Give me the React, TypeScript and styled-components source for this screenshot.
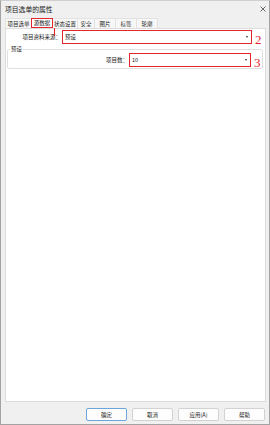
import React from "react";
import styled, { createGlobalStyle } from "styled-components";

const RED = "#e3262b";

const Global = createGlobalStyle`
  html, body { margin: 0; padding: 0; background: #f0f0f0; }
  * { box-sizing: border-box; }
  body { font-family: "Noto Sans CJK SC", "Noto Sans", sans-serif; font-size: 5.5px; color: #1a1a1a; }
`;

const Window = styled.div`
  width: 270px;
  height: 425px;
  border: 1px solid #a3a3a3;
  border-top-color: #cfcfcf;
  background: #f0f0f0;
  display: flex;
  flex-direction: column;
  position: relative;
`;

const TitleBar = styled.div`
  height: 16px;
  flex: none;
  display: flex;
  align-items: center;
  justify-content: space-between;
  padding: 0 3px 1px 4px;
  font-size: 6.8px;
  color: #222;
`;

const TabRow = styled.div`
  height: 11px;
  flex: none;
  display: flex;
  align-items: flex-end;
  padding-left: 4px;
  position: relative;
`;

const Tab = styled.div<{ $active?: boolean; $w: number }>`
  width: ${(p) => p.$w}px;
  height: 10px;
  display: flex;
  align-items: center;
  justify-content: center;
  background: ${(p) => (p.$active ? "#ffffff" : "#f7f7f7")};
  border: ${(p) => (p.$active ? `1.5px solid ${RED}` : "1px solid #e2e2e2")};
  border-bottom: ${(p) => (p.$active ? `1.5px solid ${RED}` : "none")};
  margin-right: -1px;
  font-size: 5.5px;
  white-space: nowrap;
  position: relative;
  z-index: ${(p) => (p.$active ? 1 : 0)};
`;

const Callout = styled.svg`
  position: absolute;
  left: 52px;
  top: 11px;
  z-index: 2;
`;

const Panel = styled.div`
  flex: 1;
  margin: 0 3px 0 4px;
  background: #ffffff;
  border: 1px solid #dcdcdc;
  padding: 1px 2px 0 0;
  display: flex;
  flex-direction: column;
`;

const FieldRow = styled.div`
  display: flex;
  align-items: center;
  height: 14px;
`;

const Label = styled.div<{ $w: number }>`
  width: ${(p) => p.$w}px;
  flex: none;
  text-align: right;
  font-size: 5.5px;
  line-height: 7px;
  padding: 1px 1px 0 0;
`;

const Select = styled.div`
  flex: 1;
  height: 14px;
  border: 1.5px solid ${RED};
  background: #fff;
  display: flex;
  align-items: center;
  justify-content: space-between;
  padding: 0 3px 0 2px;
  font-size: 5.5px;
`;

const Caret = styled.span`
  width: 0;
  height: 0;
  border-left: 1.5px solid transparent;
  border-right: 1.5px solid transparent;
  border-top: 2px solid #333;
`;

const Marker = styled.span`
  width: 11px;
  flex: none;
  padding-left: 3px;
  align-self: flex-end;
  margin-bottom: -2px;
  font-family: "Liberation Serif", serif;
  font-size: 13px;
  color: ${RED};
  line-height: 1;
`;

const Group = styled.fieldset`
  margin: 1px 0 0 1px;
  padding: 0 0 1px 0;
  border: 1px solid #e0e0e0;
  border-radius: 2px;
  min-width: 0;
`;

const Legend = styled.legend`
  font-size: 5.5px;
  line-height: 8px;
  padding: 0 1px;
  margin-left: 2px;
`;

const Footer = styled.div`
  height: 22px;
  flex: none;
  display: flex;
  justify-content: flex-end;
  align-items: flex-start;
  gap: 5px;
  padding: 6px 4px 0 0;
`;

const Button = styled.div<{ $default?: boolean }>`
  width: 41px;
  height: 13px;
  display: flex;
  align-items: center;
  justify-content: center;
  background: #fdfdfd;
  border: 1px solid ${(p) => (p.$default ? "#6aa6dc" : "#d2d2d2")};
  border-radius: 2px;
  font-size: 5.5px;
  color: #222;
`;

const tabs: [string, number, boolean?][] = [
  ["项目选单", 27],
  ["源数据", 22, true],
  ["状态设置", 26],
  ["安全", 18],
  ["图片", 22],
  ["标签", 22],
  ["轮廓", 22],
];

export default function App() {
  return (
    <>
      <Global />
      <Window>
        <TitleBar>
          <span>项目选单的属性</span>
          <svg width="6" height="6" viewBox="0 0 6 6">
            <path d="M0.5 0.5 L5.5 5.5 M5.5 0.5 L0.5 5.5" stroke="#444" strokeWidth="0.8" />
          </svg>
        </TitleBar>
        <TabRow>
          {tabs.map(([t, w, a]) => (
            <Tab key={t} $w={w} $active={a}>
              {t}
            </Tab>
          ))}
          <Callout width="3" height="8" viewBox="0 0 3 8">
            <path d="M1.5 0 L1.5 8" stroke={RED} strokeWidth="1.1" />
          </Callout>
        </TabRow>
        <Panel>
          <FieldRow>
            <Label $w={56}>项目资料来源：</Label>
            <Select>
              <span>预设</span>
              <Caret />
            </Select>
            <Marker>2</Marker>
          </FieldRow>
          <Group>
            <Legend>预设</Legend>
            <FieldRow>
              <Label $w={121}>项目数：</Label>
              <Select>
                <span>10</span>
                <Caret />
              </Select>
              <Marker>3</Marker>
            </FieldRow>
          </Group>
        </Panel>
        <Footer>
          <Button $default>确定</Button>
          <Button>取消</Button>
          <Button>应用(A)</Button>
          <Button>帮助</Button>
        </Footer>
      </Window>
    </>
  );
}
